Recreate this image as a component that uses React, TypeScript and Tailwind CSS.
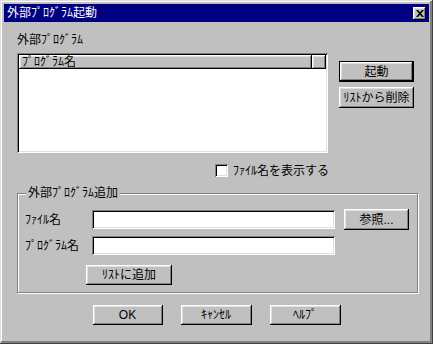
import React from "react";

const raised =
  "shadow-[inset_-1px_-1px_#000,inset_1px_1px_#fff,inset_-2px_-2px_#808080,inset_2px_2px_#dfdfdf]";
const sunken =
  "shadow-[inset_1px_1px_#808080,inset_-1px_-1px_#fff,inset_2px_2px_#000,inset_-2px_-2px_#dfdfdf]";

function Btn({ label, className = "", isDefault = false }: { label: string; className?: string; isDefault?: boolean }) {
  if (isDefault) {
    return (
      <div className={`border border-black ${className}`}>
        <div className={`h-full w-full bg-[#c0c0c0] flex items-center justify-center whitespace-nowrap ${raised}`}>{label}</div>
      </div>
    );
  }
  return (
    <div className={`bg-[#c0c0c0] flex items-center justify-center whitespace-nowrap ${raised} ${className}`}>{label}</div>
  );
}

function Field() {
  return <div className={`w-[243px] h-[19px] bg-white ${sunken}`} />;
}

export default function App() {
  return (
    <div className="w-[433px] h-[344px] bg-[#c0c0c0] p-[4px] flex flex-col text-[12px] leading-[14px] text-black font-['Liberation_Sans','Noto_Sans_CJK_JP',sans-serif] shadow-[inset_-1px_-1px_#404040,inset_1px_1px_#dfdfdf,inset_-3px_-3px_#808080,inset_2px_2px_#fff]">
      {/* title bar */}
      <div className="h-[18px] bg-[#000080] flex items-center justify-between pl-[3px] pr-[3px]">
        <span className="text-white">外部ﾌﾟﾛｸﾞﾗﾑ起動</span>
        <div className={`w-[13px] h-[13px] bg-[#c0c0c0] flex items-center justify-center ${raised}`}>
          <svg width="8" height="7" viewBox="0 0 8 7">
            <path d="M0 0h2l2 2.3L6 0h2L5 3.5 8 7H6L4 4.7 2 7H0l3-3.5z" fill="#000" />
          </svg>
        </div>
      </div>

      <div className="px-[13px] flex flex-col">
        <div className="mt-[11px] h-[14px]">外部ﾌﾟﾛｸﾞﾗﾑ</div>

        <div className="mt-[6px] flex">
          <div className={`w-[311px] h-[100px] bg-white p-[2px] ${sunken}`}>
            <div className="flex h-[14px]">
              <div className={`w-[293px] bg-[#c0c0c0] pl-[3px] ${raised}`}>ﾌﾟﾛｸﾞﾗﾑ名</div>
              <div className={`flex-1 bg-[#c0c0c0] ${raised}`} />
            </div>
          </div>
          <div className="ml-[11px] pt-[8px] flex flex-col gap-[5px]">
            <Btn label="起動" isDefault className="w-[75px] h-[21px]" />
            <Btn label="ﾘｽﾄから削除" className="w-[75px] h-[21px]" />
          </div>
        </div>

        <div className="mt-[11px] pl-[198px] flex items-center h-[13px]">
          <div className={`w-[13px] h-[13px] bg-white ${sunken}`} />
          <span className="ml-[5px]">ﾌｧｲﾙ名を表示する</span>
        </div>

        <div className="relative mt-[16px] w-[401px] border border-[#808080] shadow-[inset_1px_1px_#fff,1px_1px_#fff] pt-[15px] pb-[7px] pl-[7px]">
          <span className="absolute -top-[8px] left-[8px] bg-[#c0c0c0] px-[2px]">外部ﾌﾟﾛｸﾞﾗﾑ追加</span>
          <div className="flex items-center h-[21px]">
            <span className="w-[67px]">ﾌｧｲﾙ名</span>
            <Field />
            <Btn label="参照..." className="ml-[9px] w-[65px] h-[21px]" />
          </div>
          <div className="mt-[6px] flex items-center h-[19px]">
            <span className="w-[67px]">ﾌﾟﾛｸﾞﾗﾑ名</span>
            <Field />
          </div>
          <Btn label="ﾘｽﾄに追加" className="mt-[10px] ml-[61px] w-[86px] h-[20px]" />
        </div>
      </div>

      <div className="mt-[12px] flex justify-center gap-[18px]">
        <Btn label="OK" className="w-[70px] h-[20px]" />
        <Btn label="ｷｬﾝｾﾙ" className="w-[71px] h-[20px]" />
        <Btn label="ﾍﾙﾌﾟ" className="w-[71px] h-[20px]" />
      </div>
    </div>
  );
}
